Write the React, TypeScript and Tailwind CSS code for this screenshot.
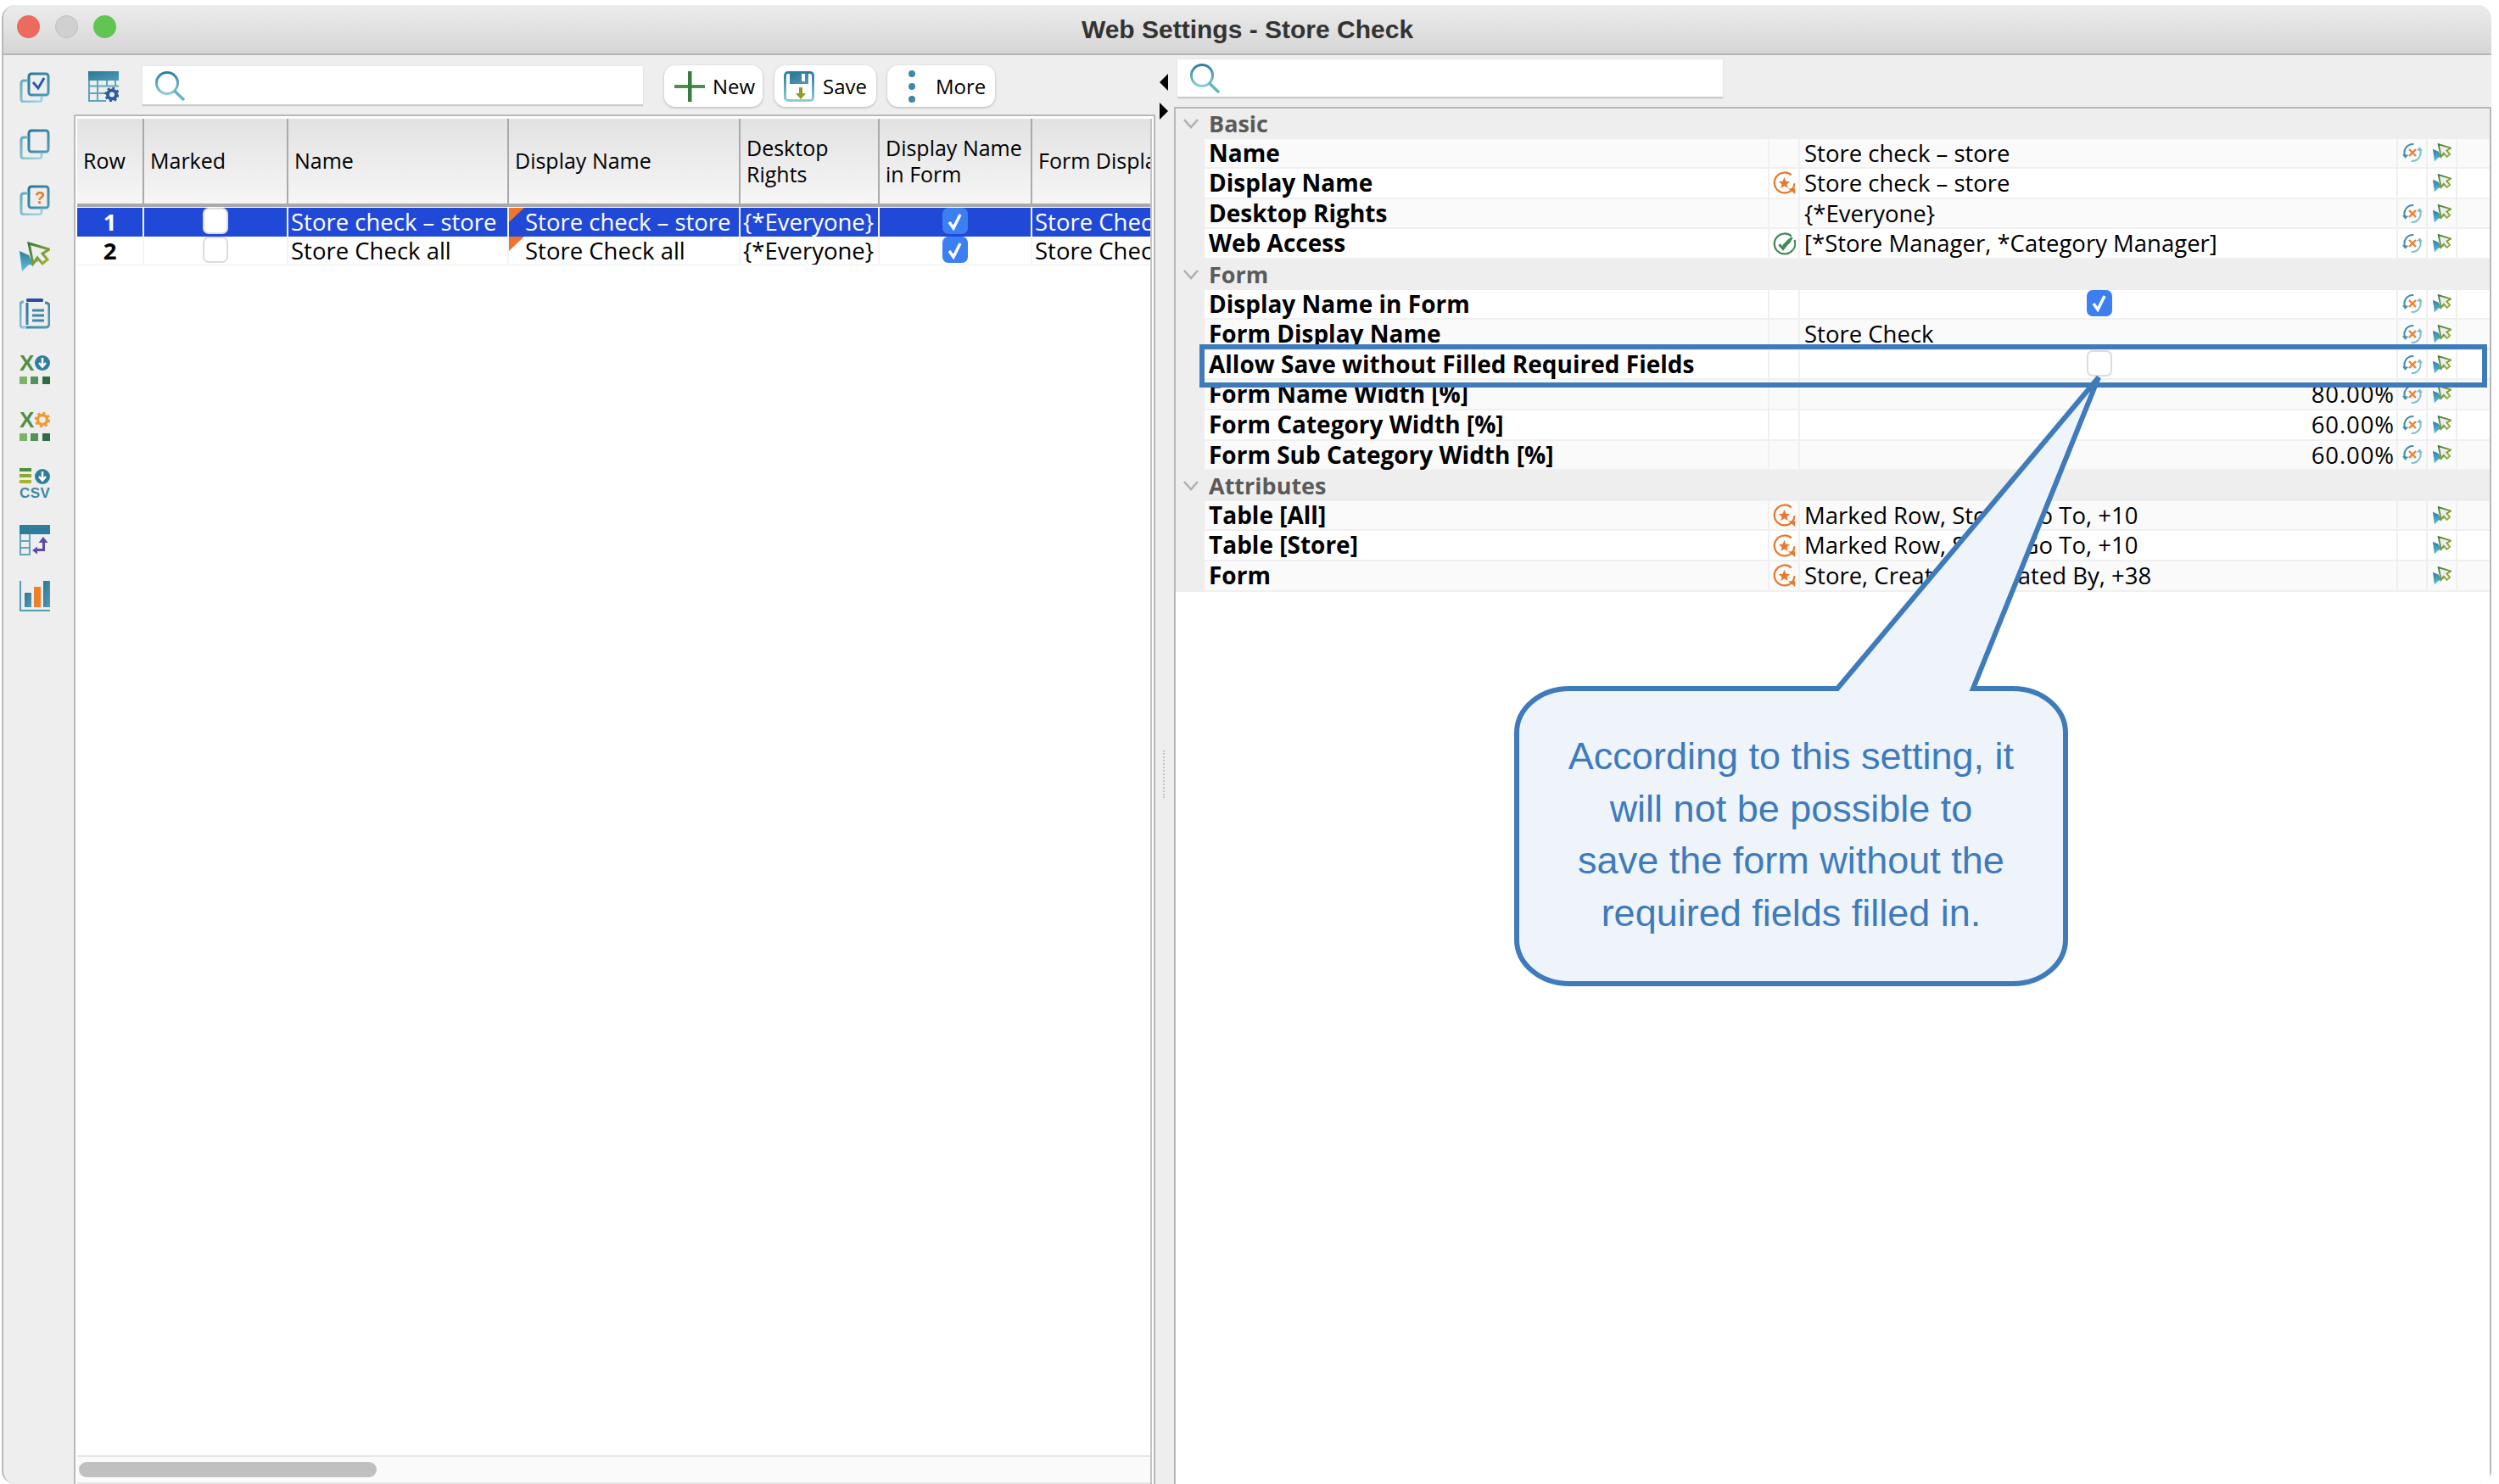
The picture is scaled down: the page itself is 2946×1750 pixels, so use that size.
import type { ReactNode } from "react";

type Prop = {
  label: string;
  value?: string;
  kind?: "text" | "check" | "uncheck" | "percent";
  badge?: "orange" | "green";
  reset?: boolean;
};

type Group = { title: string; rows: Prop[] };

const GROUPS: Group[] = [
  {
    title: "Basic",
    rows: [
      { label: "Name", value: "Store check – store", reset: true },
      { label: "Display Name", value: "Store check – store", badge: "orange" },
      { label: "Desktop Rights", value: "{*Everyone}", reset: true },
      { label: "Web Access", value: "[*Store Manager, *Category Manager]", badge: "green", reset: true },
    ],
  },
  {
    title: "Form",
    rows: [
      { label: "Display Name in Form", kind: "check", reset: true },
      { label: "Form Display Name", value: "Store Check", reset: true },
      { label: "Allow Save without Filled Required Fields", kind: "uncheck", reset: true },
      { label: "Form Name Width [%]", value: "80.00%", kind: "percent", reset: true },
      { label: "Form Category Width [%]", value: "60.00%", kind: "percent", reset: true },
      { label: "Form Sub Category Width [%]", value: "60.00%", kind: "percent", reset: true },
    ],
  },
  {
    title: "Attributes",
    rows: [
      { label: "Table [All]", value: "Marked Row, Store, Go To, +10", badge: "orange" },
      { label: "Table [Store]", value: "Marked Row, Store, Go To, +10", badge: "orange" },
      { label: "Form", value: "Store, Created, Updated By, +38", badge: "orange" },
    ],
  },
];

const TABLE_GRID = "grid grid-cols-[79px_170px_260px_273px_164px_180px_139px]";

function Gradients() {
  return (
    <svg className="absolute w-0 h-0">
      <defs>
        <linearGradient id="teal" x1="0" y1="0" x2="0" y2="1">
          <stop offset="0" stopColor="#2f7d9c" />
          <stop offset="1" stopColor="#8ccbd8" />
        </linearGradient>
        <linearGradient id="tealDark" x1="0" y1="0" x2="1" y2="1">
          <stop offset="0" stopColor="#2c7698" />
          <stop offset="1" stopColor="#4f9db5" />
        </linearGradient>
        <linearGradient id="tealLight" x1="0" y1="0" x2="1" y2="1">
          <stop offset="0" stopColor="#5fa9bf" />
          <stop offset="1" stopColor="#a3d6e0" />
        </linearGradient>
        <linearGradient id="cursorBlue" x1="0" y1="0" x2="0" y2="1">
          <stop offset="0" stopColor="#2e7ea0" />
          <stop offset="1" stopColor="#5fc0d8" />
        </linearGradient>
        <linearGradient id="cursorGreen" x1="0" y1="0" x2="1" y2="1">
          <stop offset="0" stopColor="#3f7a3a" />
          <stop offset="1" stopColor="#a3b72e" />
        </linearGradient>
      </defs>
    </svg>
  );
}

function Icon({ size = 36, children }: { size?: number; children: ReactNode }) {
  return (
    <svg width={size} height={size} viewBox="0 0 36 36" fill="none" className="shrink-0">
      {children}
    </svg>
  );
}

function StackIcon({ children }: { children?: ReactNode }) {
  return (
    <Icon>
      <path d="M9 10H5a3 3 0 0 0-3 3v19a3 3 0 0 0 3 3h18a3 3 0 0 0 3-3v-3" stroke="url(#tealLight)" strokeWidth="3" />
      <rect x="11" y="2" width="23" height="25" rx="3" stroke="url(#tealDark)" strokeWidth="3" fill="#eeeeee" />
      {children}
    </Icon>
  );
}

function CursorIcon({ size = 36 }: { size?: number }) {
  return (
    <Icon size={size}>
      <path d="M0 11l11 5 6 12-6-1-8 8z" fill="url(#cursorBlue)" />
      <path d="M19 26l3-4-3-2 3-1z" fill="#2e7ea0" />
      <path d="M11 2l24 7-8 5 6 7-6 5-6-7-5 7z" fill="#eeeeee" stroke="url(#cursorGreen)" strokeWidth="3" strokeLinejoin="miter" />
    </Icon>
  );
}

function SearchIcon() {
  return (
    <Icon>
      <circle cx="15" cy="15" r="12.5" stroke="url(#teal)" strokeWidth="3" />
      <path d="M23.5 24L35 35" stroke="#67b2c4" strokeWidth="3.5" />
    </Icon>
  );
}

function TableGearIcon() {
  return (
    <Icon>
      <path d="M0 0h36v11H0z" fill="url(#tealDark)" />
      <path d="M1 11v24h20M1 17.5h35M1 26h20M11 11v24M22 11v6M32 11v6" stroke="#5fa5bb" strokeWidth="2" />
      <circle cx="28" cy="27.5" r="5" stroke="#2f5c9e" strokeWidth="4" fill="#eeeeee" />
      <circle cx="28" cy="27.5" r="7.5" stroke="#2f5c9e" strokeWidth="2.5" strokeDasharray="3 2.9" />
    </Icon>
  );
}

function ExcelIcon({ children }: { children: ReactNode }) {
  return (
    <Icon>
      <text x="0" y="19" fontFamily="'Liberation Sans', sans-serif" fontWeight="700" fontSize="26" fill="#4f8f45">
        X
      </text>
      {children}
      <rect x="0" y="26" width="9" height="9" fill="#79b562" />
      <rect x="13" y="26" width="9" height="9" fill="#52935a" />
      <rect x="27" y="26" width="9" height="9" fill="#2e6e42" />
    </Icon>
  );
}

function DownCircle() {
  return (
    <>
      <circle cx="27" cy="10" r="9" fill="#2f7d9c" />
      <path d="M27 4v10M23 10l4 4.5 4-4.5" stroke="#fff" strokeWidth="2.5" />
    </>
  );
}

function GearOrange() {
  return (
    <>
      <circle cx="27" cy="10" r="5.5" stroke="#ef9a2e" strokeWidth="3.5" />
      <circle cx="27" cy="10" r="8" stroke="#ef9a2e" strokeWidth="2.5" strokeDasharray="3 3.3" />
    </>
  );
}

function CsvIcon() {
  return (
    <Icon>
      <rect x="0" y="0" width="14" height="4" fill="#4f8f45" />
      <rect x="0" y="7" width="14" height="4" fill="#8ea92e" />
      <rect x="0" y="14" width="14" height="4" fill="#a6b52e" />
      <DownCircle />
      <text x="0" y="35" fontFamily="'Liberation Sans', sans-serif" fontWeight="700" fontSize="17" letterSpacing="0.5" fill="#3f87a6">
        CSV
      </text>
    </Icon>
  );
}

function TableMoveIcon() {
  return (
    <Icon>
      <path d="M0 0h36v11H0z" fill="#2f7d9c" />
      <path d="M1 11v24h11V11M1 19h11M1 27h11" stroke="#5fa5bb" strokeWidth="2" />
      <path d="M28 14l5.5 7H30v10H21v3.5L15 30l6-4.5V28h6v-7h-4.5z" fill="#5f4a9e" />
    </Icon>
  );
}

function ChartIcon() {
  return (
    <Icon>
      <path d="M1 0v35h35" stroke="#4f9db5" strokeWidth="2" />
      <rect x="6" y="14" width="8" height="17" fill="url(#tealDark)" />
      <rect x="17" y="7" width="8" height="24" fill="#ee7f2d" />
      <rect x="28" y="0" width="8" height="31" fill="url(#tealDark)" />
    </Icon>
  );
}

function ClipboardIcon() {
  return (
    <Icon>
      <path d="M5 4H4a3 3 0 0 0-3 3v24a3 3 0 0 0 3 3h5" stroke="url(#tealLight)" strokeWidth="3" />
      <path d="M8 34h23a4 4 0 0 0 4-4V9a4 4 0 0 0-4-4h-1M9 5v26" stroke="url(#tealDark)" strokeWidth="3" />
      <rect x="8" y="0" width="20" height="4" rx="1.5" fill="#2a4f9e" />
      <path d="M15 14h14M15 20h14M15 26h14" stroke="#3f87a6" strokeWidth="3" />
    </Icon>
  );
}

function ResetIcon() {
  return (
    <Icon size={24}>
      <path d="M5 24A15 15 0 0 1 20 3" stroke="#3f8eac" strokeWidth="3" />
      <path d="M0 21l5 7 6-6z" fill="#3f8eac" />
      <path d="M31 12a15 15 0 0 1-15 21" stroke="#7cc0d0" strokeWidth="3" />
      <path d="M36 15l-5-7-6 6z" fill="#7cc0d0" />
      <path d="M12 12l12 12M24 12L12 24" stroke="#ee7f2d" strokeWidth="3.5" />
    </Icon>
  );
}

function BadgeIcon({ tone }: { tone: "orange" | "green" }) {
  const color = tone === "orange" ? "#e8782b" : "#3f8a55";
  return (
    <Icon size={27}>
      <path d="M29 6A16 16 0 1 0 30 29" stroke={color} strokeWidth="3" />
      {tone === "orange" ? (
        <>
          <path d="M34 19A16 16 0 0 1 30 29" stroke={color} strokeWidth="3" />
          <path d="M24 27h11v9z" fill={color} />
          <path d="M18 9l2.5 6.5 6.5.5-5 4.2 1.6 6.5-5.6-3.6-5.6 3.6 1.6-6.5-5-4.2 6.5-.5z" fill={color} />
        </>
      ) : (
        <>
          <path d="M34 12a16 16 0 0 1-5 18" stroke={color} strokeWidth="3" />
          <path d="M10 19l6 7L30 8" stroke={color} strokeWidth="4" />
          <path d="M16 19l9-9 4 4-9 9-6 2z" fill={color} />
        </>
      )}
    </Icon>
  );
}

function Checkbox({ checked }: { checked?: boolean }) {
  if (checked) {
    return (
      <span className="flex items-center justify-center w-[30px] h-[31px] rounded-[7px] bg-[#3b7ff2]">
        <svg width="20" height="22" viewBox="0 0 20 22" fill="none">
          <path d="M3 12l5 7L16 3" stroke="#fff" strokeWidth="3.5" />
        </svg>
      </span>
    );
  }
  return <span className="block w-[30px] h-[31px] rounded-[7px] bg-white border-2 border-[#dcdcdc]" />;
}

function Corner() {
  return (
    <svg width="18" height="17" viewBox="0 0 18 17" className="absolute left-0 top-0">
      <path d="M0 0h18L0 17z" fill="#ee7430" />
    </svg>
  );
}

function LeftTable() {
  const rows = [
    { id: "1", name: "Store check – store", selected: true },
    { id: "2", name: "Store Check all", selected: false },
  ];
  const heads = ["Row", "Marked", "Name", "Display Name", "Desktop\nRights", "Display Name\nin Form", "Form Display Name"];
  return (
    <div className="flex-1 min-h-0 flex flex-col border-l-2 border-t-2 border-r-2 border-[#b8b8b8] bg-white pt-[3px] pl-[2px] pr-[2px]">
      <div className="flex-1 min-h-0 flex flex-col border-r-2 border-[#c4c4c4]">
        <div className={`${TABLE_GRID} h-[104px] border-b-4 border-[#a9a9a9] bg-gradient-to-b from-[#e2e2e2] to-[#f6f6f6]`}>
          {heads.map((h, i) => (
            <div
              key={h}
              className={`flex items-center whitespace-pre overflow-hidden px-[7px] pb-[1px] text-[25px] leading-[31px] text-black ${i < heads.length - 1 ? "border-r-2 border-[#a9a9a9]" : ""}`}
            >
              {h}
            </div>
          ))}
        </div>
        <div className="flex-1 pt-[1px]">
          {rows.map((r) => {
            const cell = r.selected ? "bg-[#2149d8] text-white" : "bg-white text-black";
            return (
              <div
                key={r.id}
                className={`${TABLE_GRID} h-[34px] text-[27.5px] leading-[33px] whitespace-nowrap ${r.selected ? "" : "border-b-2 border-[#efefef]"}`}
              >
                <div className={`${cell} text-center font-bold border-r-2 border-[#f4f4f4] ${r.selected ? "" : "text-[#333333]"}`}>{r.id}</div>
                <div className={`${cell} flex justify-center border-r-2 border-[#f4f4f4]`}>
                  <Checkbox />
                </div>
                <div className={`${cell} px-[3px] border-r-2 border-[#f4f4f4] overflow-hidden`}>{r.name}</div>
                <div className={`${cell} relative pl-[19px] border-r-2 border-[#f4f4f4] overflow-hidden`}>
                  <Corner />
                  {r.name}
                </div>
                <div className={`${cell} px-[3px] border-r-2 border-[#f4f4f4] overflow-hidden`}>{"{*Everyone}"}</div>
                <div className={`${cell} flex justify-center border-r-2 border-[#f4f4f4]`}>
                  <Checkbox checked />
                </div>
                <div className={`${cell} pl-[3px] overflow-hidden`}>Store Check</div>
              </div>
            );
          })}
        </div>
        <div className="h-[34px] border-t-2 border-[#e6e6e6] border-b-2 bg-[#fafafa] pt-[6px] pl-[2px]">
          <div className="w-[351px] h-[18px] rounded-full bg-[#c0c0c0]" />
        </div>
      </div>
    </div>
  );
}

function ToolButton({ width, className, icon, label }: { width: string; className: string; icon: ReactNode; label: string }) {
  return (
    <button className={`flex items-center h-[49px] rounded-[13px] bg-white shadow-[0_1px_3px_rgba(0,0,0,0.25)] text-[24px] text-black ${width} ${className}`}>
      {icon}
      {label}
    </button>
  );
}

function LeftPanel() {
  return (
    <div className="w-[1275px] flex flex-col">
      <div className="h-[70px] shrink-0 flex items-center pt-[3px]">
        <div className="ml-[17px]">
          <TableGearIcon />
        </div>
        <div className="ml-[28px] w-[590px] h-[47px] bg-white border-b-2 border-[#c9c9c9] shadow-[0_0_2px_rgba(0,0,0,0.1)] pl-[14px] flex items-center">
          <SearchIcon />
        </div>
        <ToolButton
          width="w-[116px]"
          className="ml-[25px] pl-[12px] gap-[9px]"
          label="New"
          icon={
            <Icon>
              <rect x="0" y="16" width="36" height="4" fill="#4f8f4a" />
              <rect x="16" y="0" width="4.5" height="36" fill="#3a7a45" />
            </Icon>
          }
        />
        <ToolButton
          width="w-[120px]"
          className="ml-[14px] pl-[11px] gap-[10px]"
          label="Save"
          icon={
            <Icon>
              <path d="M5 1.5h26a3.5 3.5 0 0 1 3.5 3.5v26a3.5 3.5 0 0 1-3.5 3.5H5A3.5 3.5 0 0 1 1.5 31V5A3.5 3.5 0 0 1 5 1.5z" stroke="url(#teal)" strokeWidth="3" />
              <path d="M7 3h22v12H7z" fill="url(#tealDark)" />
              <rect x="21" y="3" width="4" height="9" fill="#fff" />
              <path d="M22 19v7h4l-6 7-6-7h4v-7z" fill="#8f9e22" />
            </Icon>
          }
        />
        <ToolButton
          width="w-[127px]"
          className="ml-[13px] pl-[19px] gap-[18px]"
          label="More"
          icon={
            <svg width="20" height="40" viewBox="0 0 20 40">
              <circle cx="10" cy="5" r="4" fill="#3f87a6" />
              <circle cx="10" cy="20" r="4" fill="#3f87a6" />
              <circle cx="10" cy="35" r="4" fill="#3f87a6" />
            </svg>
          }
        />
      </div>
      <LeftTable />
    </div>
  );
}

function Splitter() {
  return (
    <div className="w-[22px] shrink-0 flex flex-col items-start pl-[5px] pt-[22px]">
      <svg width="10" height="20" viewBox="0 0 10 20">
        <path d="M10 0v20L0 10z" fill="#000" />
      </svg>
      <svg width="10" height="20" viewBox="0 0 10 20" className="mt-[14px]">
        <path d="M0 0v20l10-10z" fill="#000" />
      </svg>
      <div className="mt-[744px] ml-[4px] h-[56px] border-l-2 border-dotted border-[#c4c4c4]" />
    </div>
  );
}

function PropRow({ row, shade }: { row: Prop; shade: boolean }) {
  const tint = shade ? "bg-[#fafafa]" : "bg-white";
  const cellLine = "border-b-2 border-[#f0f0f0]";
  return (
    <div className="flex h-[35.6px] text-[27.5px] leading-[33px] text-black whitespace-nowrap">
      <div className="w-[34px] shrink-0 bg-[#eeeeee]" />
      <div className={`w-[666px] shrink-0 pl-[5px] text-[28px] font-bold ${tint} ${cellLine} border-r-2`}>{row.label}</div>
      <div className={`w-[36px] shrink-0 flex items-center justify-center ${tint} ${cellLine} border-r-2`}>
        {row.badge && <BadgeIcon tone={row.badge} />}
      </div>
      <div className={`w-[705px] shrink-0 flex ${tint} ${cellLine} border-r-2 pl-[5px] pr-[2px] ${row.kind === "percent" ? "justify-end tracking-[0.9px]" : ""} ${row.kind === "check" || row.kind === "uncheck" ? "justify-center" : ""}`}>
        {row.kind === "check" && <Checkbox checked />}
        {row.kind === "uncheck" && <Checkbox />}
        {(row.kind === undefined || row.kind === "text" || row.kind === "percent") && row.value}
      </div>
      <div className={`w-[35px] shrink-0 flex items-center justify-center ${tint} ${cellLine} border-r-2`}>{row.reset && <ResetIcon />}</div>
      <div className={`w-[35px] shrink-0 flex items-center justify-center ${tint} ${cellLine} border-r-2`}>
        <CursorIcon size={22} />
      </div>
      <div className={`flex-1 ${tint} ${cellLine}`} />
    </div>
  );
}

function RightPanel() {
  let n = 0;
  return (
    <div className="flex-1 min-w-0 flex flex-col">
      <div className="h-[61px] shrink-0 pt-[5px] pl-[4px]">
        <div className="w-[643px] h-[46px] bg-white border-b-2 border-[#c9c9c9] shadow-[0_0_2px_rgba(0,0,0,0.1)] pl-[14px] flex items-center">
          <SearchIcon />
        </div>
      </div>
      <div className="flex-1 border-l-2 border-t-2 border-r-2 border-[#b8b8b8] bg-white">
        {GROUPS.map((g) => {
          n++;
          return (
            <div key={g.title}>
              <div className="flex items-center h-[35.6px] bg-[#eeeeee] text-[27px] font-bold text-[#5a5a5a]">
                <svg width="18" height="12" viewBox="0 0 18 12" fill="none" className="ml-[9px] mr-[12px]">
                  <path d="M1 1l8 9 8-9" stroke="#b0b0b0" strokeWidth="2.5" />
                </svg>
                {g.title}
              </div>
              {g.rows.map((r) => (
                <PropRow key={r.label} row={r} shade={n++ % 2 === 1} />
              ))}
            </div>
          );
        })}
      </div>
    </div>
  );
}

function Callout() {
  const lines = ["According to this setting, it", "will not be possible to", "save the form without the", "required fields filled in."];
  return (
    <>
      <div className="absolute left-[1414px] top-[406px] w-[1518px] h-[51px] border-[6px] border-[#3f7bbb]" />
      <svg width="700" height="735" viewBox="1780 435 700 735" className="absolute left-[1780px] top-[435px]">
        <path
          d="M1850 812H2166L2474 445L2326 812H2373A62 52 0 0 1 2435 864V1108A62 52 0 0 1 2373 1160H1850A62 52 0 0 1 1788 1108V864A62 52 0 0 1 1850 812Z"
          fill="#eef4fa"
          stroke="#3f7bbb"
          strokeWidth="6"
        />
      </svg>
      <div className="absolute left-[1785px] top-[861px] w-[653px] text-center font-['Liberation_Sans',sans-serif] text-[45px] leading-[61.6px] text-[#3f7bbb] whitespace-nowrap">
        {lines.map((l) => (
          <div key={l}>{l}</div>
        ))}
      </div>
    </>
  );
}

export default function App() {
  return (
    <div className="relative w-[2946px] h-[1750px] overflow-hidden bg-white pt-[6px] pl-[2px] font-['Open_Sans',sans-serif]">
      <Gradients />
      <div className="w-[2935px] h-[1744px] flex flex-col rounded-t-[16px] rounded-b-[16px] overflow-hidden border-l-2 border-[#b9b9b9] bg-[#eeeeee]">
        <div className="relative h-[59px] shrink-0 flex items-center justify-center bg-gradient-to-b from-[#ececec] to-[#d6d6d6] border-b-2 border-[#b5b5b5]">
          <div className="absolute left-[16px] top-[12px] flex gap-[18px]">
            <span className="w-[27px] h-[27px] rounded-full bg-[#ec6a5e]" />
            <span className="w-[27px] h-[27px] rounded-full bg-[#d0d0d0] border border-[#bdbdbd]" />
            <span className="w-[27px] h-[27px] rounded-full bg-[#61c554]" />
          </div>
          <span className="font-['Liberation_Sans',sans-serif] font-bold text-[30px] text-[#333333]">Web Settings - Store Check</span>
        </div>
        <div className="flex-1 min-h-0 flex">
          <div className="w-[83px] shrink-0 flex flex-col items-center pt-[20px] gap-[30.7px] pr-[9px]">
            <StackIcon>
              <path d="M16 12l6 7 7-12" stroke="#2a5aa8" strokeWidth="3" />
            </StackIcon>
            <StackIcon />
            <StackIcon>
              <text x="18" y="22" fontFamily="'Liberation Sans', sans-serif" fontWeight="700" fontSize="20" fill="#e8782b">
                ?
              </text>
            </StackIcon>
            <CursorIcon />
            <ClipboardIcon />
            <ExcelIcon>
              <DownCircle />
            </ExcelIcon>
            <ExcelIcon>
              <GearOrange />
            </ExcelIcon>
            <CsvIcon />
            <TableMoveIcon />
            <ChartIcon />
          </div>
          <LeftPanel />
          <Splitter />
          <RightPanel />
        </div>
      </div>
      <Callout />
    </div>
  );
}
